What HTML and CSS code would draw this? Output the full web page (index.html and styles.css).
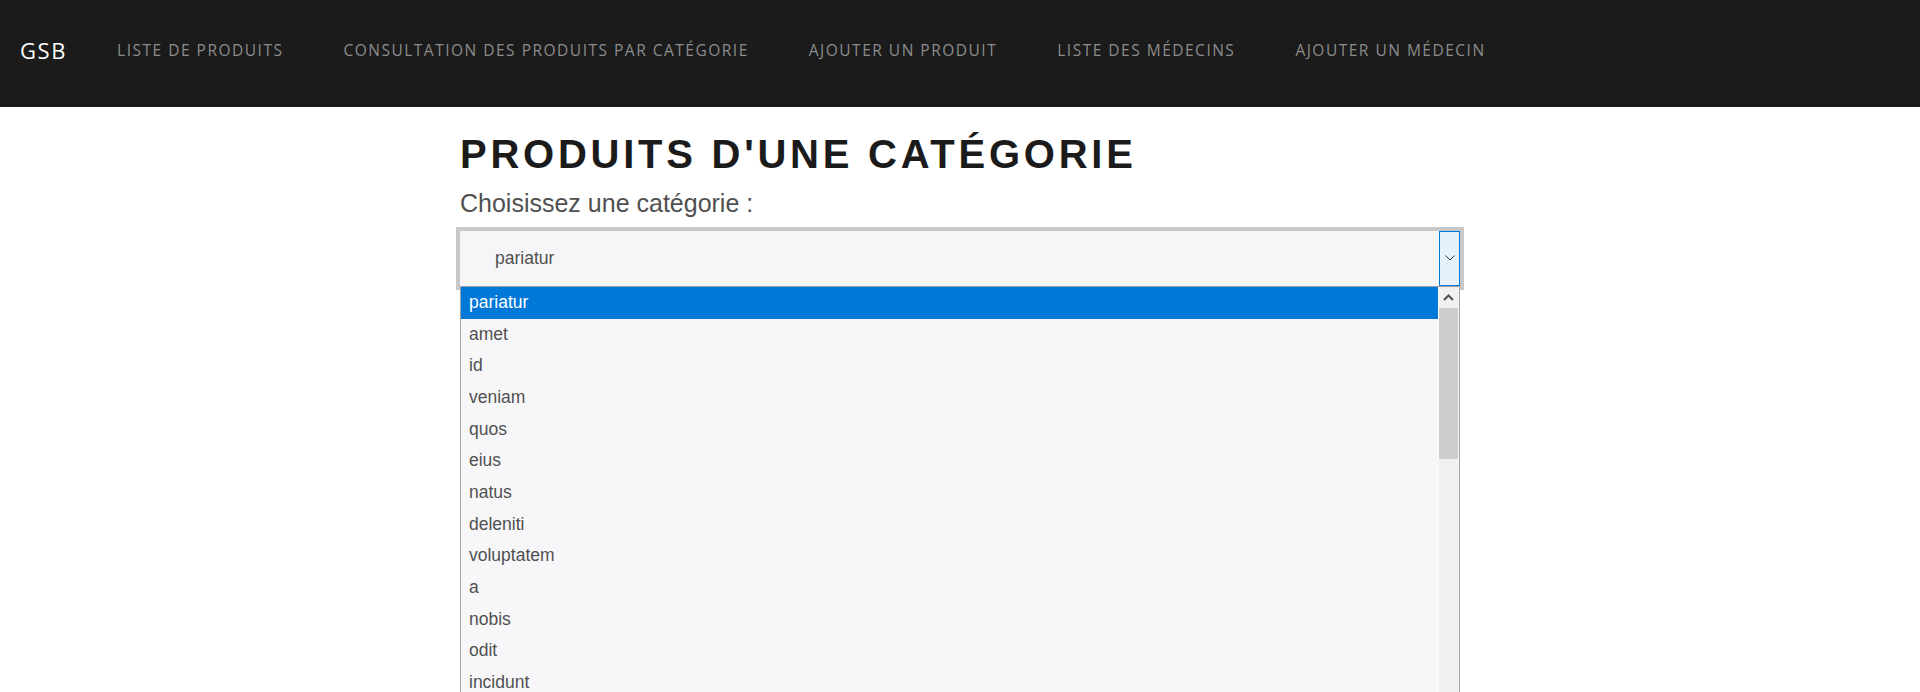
FILE: index.html
```
<!DOCTYPE html>
<html lang="fr">
<head>
<meta charset="utf-8">
<title>GSB - Produits d'une catégorie</title>
<link rel="stylesheet" href="styles.css">
</head>
<body>
<nav class="navbar">
  <a class="brand" href="#">GSB</a>
  <ul class="nav-links">
    <li><a href="#">LISTE DE PRODUITS</a></li>
    <li><a href="#">CONSULTATION DES PRODUITS PAR CATÉGORIE</a></li>
    <li><a href="#">AJOUTER UN PRODUIT</a></li>
    <li><a href="#">LISTE DES MÉDECINS</a></li>
    <li><a href="#">AJOUTER UN MÉDECIN</a></li>
  </ul>
</nav>
<main class="container">
  <h1 class="title">PRODUITS D'UNE CATÉGORIE</h1>
  <label class="label">Choisissez une catégorie :</label>
  <div class="select-wrap">
    <div class="select">
      <span class="select-value">pariatur</span>
      <span class="select-btn">
        <svg width="10" height="6" viewBox="0 0 10 6"><path d="M0.5 0.5 L5 5 L9.5 0.5" fill="none" stroke="#333" stroke-width="1"/></svg>
      </span>
    </div>
    <div class="dropdown">
      <ul class="options">
        <li class="opt selected">pariatur</li>
        <li class="opt">amet</li>
        <li class="opt">id</li>
        <li class="opt">veniam</li>
        <li class="opt">quos</li>
        <li class="opt">eius</li>
        <li class="opt">natus</li>
        <li class="opt">deleniti</li>
        <li class="opt">voluptatem</li>
        <li class="opt">a</li>
        <li class="opt">nobis</li>
        <li class="opt">odit</li>
        <li class="opt">incidunt</li>
      </ul>
      <div class="gap-strip"></div>
      <div class="scrollbar">
        <div class="sb-up">
          <svg width="11" height="7" viewBox="0 0 11 7"><path d="M1 6 L5.5 1.5 L10 6" fill="none" stroke="#505050" stroke-width="2"/></svg>
        </div>
        <div class="sb-thumb"></div>
        <div class="sb-track"></div>
      </div>
      <div class="gap-strip"></div>
    </div>
  </div>
</main>
</body>
</html>
```
FILE: styles.css
```
html, body {
  margin: 0;
  padding: 0;
  background: #ffffff;
  height: 692px;
  overflow: hidden;
}

body {
  font-family: "Liberation Sans", Arial, sans-serif;
}

.navbar {
  height: 107px;
  background: #1b1b1b;
  display: flex;
  align-items: center;
  padding: 0 0 7px 20px;
  box-sizing: border-box;
  font-family: "Open Sans", "DejaVu Sans", sans-serif;
}

.brand {
  color: #ffffff;
  text-decoration: none;
  font-size: 22px;
  letter-spacing: 1.6px;
  margin-right: 50px;
}

.nav-links {
  list-style: none;
  margin: 0;
  padding: 0;
  display: flex;
  gap: 60px;
}

.nav-links a {
  color: #8c8c8c;
  text-decoration: none;
  font-size: 15.5px;
  letter-spacing: 1.5px;
}

.container {
  width: 1000px;
  margin: 0 auto;
  padding-top: 24px;
}

.title {
  margin: 0;
  font-size: 40px;
  line-height: 46px;
  font-weight: 700;
  letter-spacing: 3.75px;
  color: #1b1b1b;
}

.label {
  display: block;
  margin-top: 12px;
  font-size: 25px;
  line-height: 28px;
  color: #505050;
}

.select-wrap {
  position: relative;
  margin: 10px 0 0 -4px;
  width: 1008px;
}

.select {
  border: 4px solid #c8c8c8;
  height: 55px;
  background: #f6f6f8;
  display: flex;
  align-items: stretch;
}

.select-value {
  flex: 1;
  display: flex;
  align-items: center;
  padding-left: 35px;
  font-size: 17.5px;
  color: #505050;
}

.select-btn {
  width: 21px;
  border: 1px solid #0078d7;
  background: #e5f1fb;
  display: flex;
  align-items: center;
  justify-content: center;
  padding-bottom: 2px;
  box-sizing: border-box;
}

.dropdown {
  position: absolute;
  left: 4px;
  top: 59px;
  width: 1000px;
  height: 420px;
  box-sizing: border-box;
  border: 1px solid #a0a0a0;
  border-bottom: none;
  background: #f7f7f9;
  display: flex;
}

.options {
  list-style: none;
  margin: 0;
  padding: 0;
  width: 977px;
  flex: none;
}

.opt {
  height: 31.67px;
  line-height: 31.67px;
  padding-left: 8px;
  font-size: 17.5px;
  color: #505050;
}

.opt.selected {
  background: #0078d7;
  color: #ffffff;
}

.gap-strip {
  width: 1px;
  flex: none;
  background: #fbfbfb;
}

.scrollbar {
  width: 19px;
  flex: none;
  display: flex;
  flex-direction: column;
  background: #f0f0f0;
}

.sb-up {
  height: 21px;
  display: flex;
  align-items: center;
  justify-content: center;
}

.sb-thumb {
  height: 151px;
  background: #cdcdcd;
}

.sb-track {
  flex: 1;
}
```
